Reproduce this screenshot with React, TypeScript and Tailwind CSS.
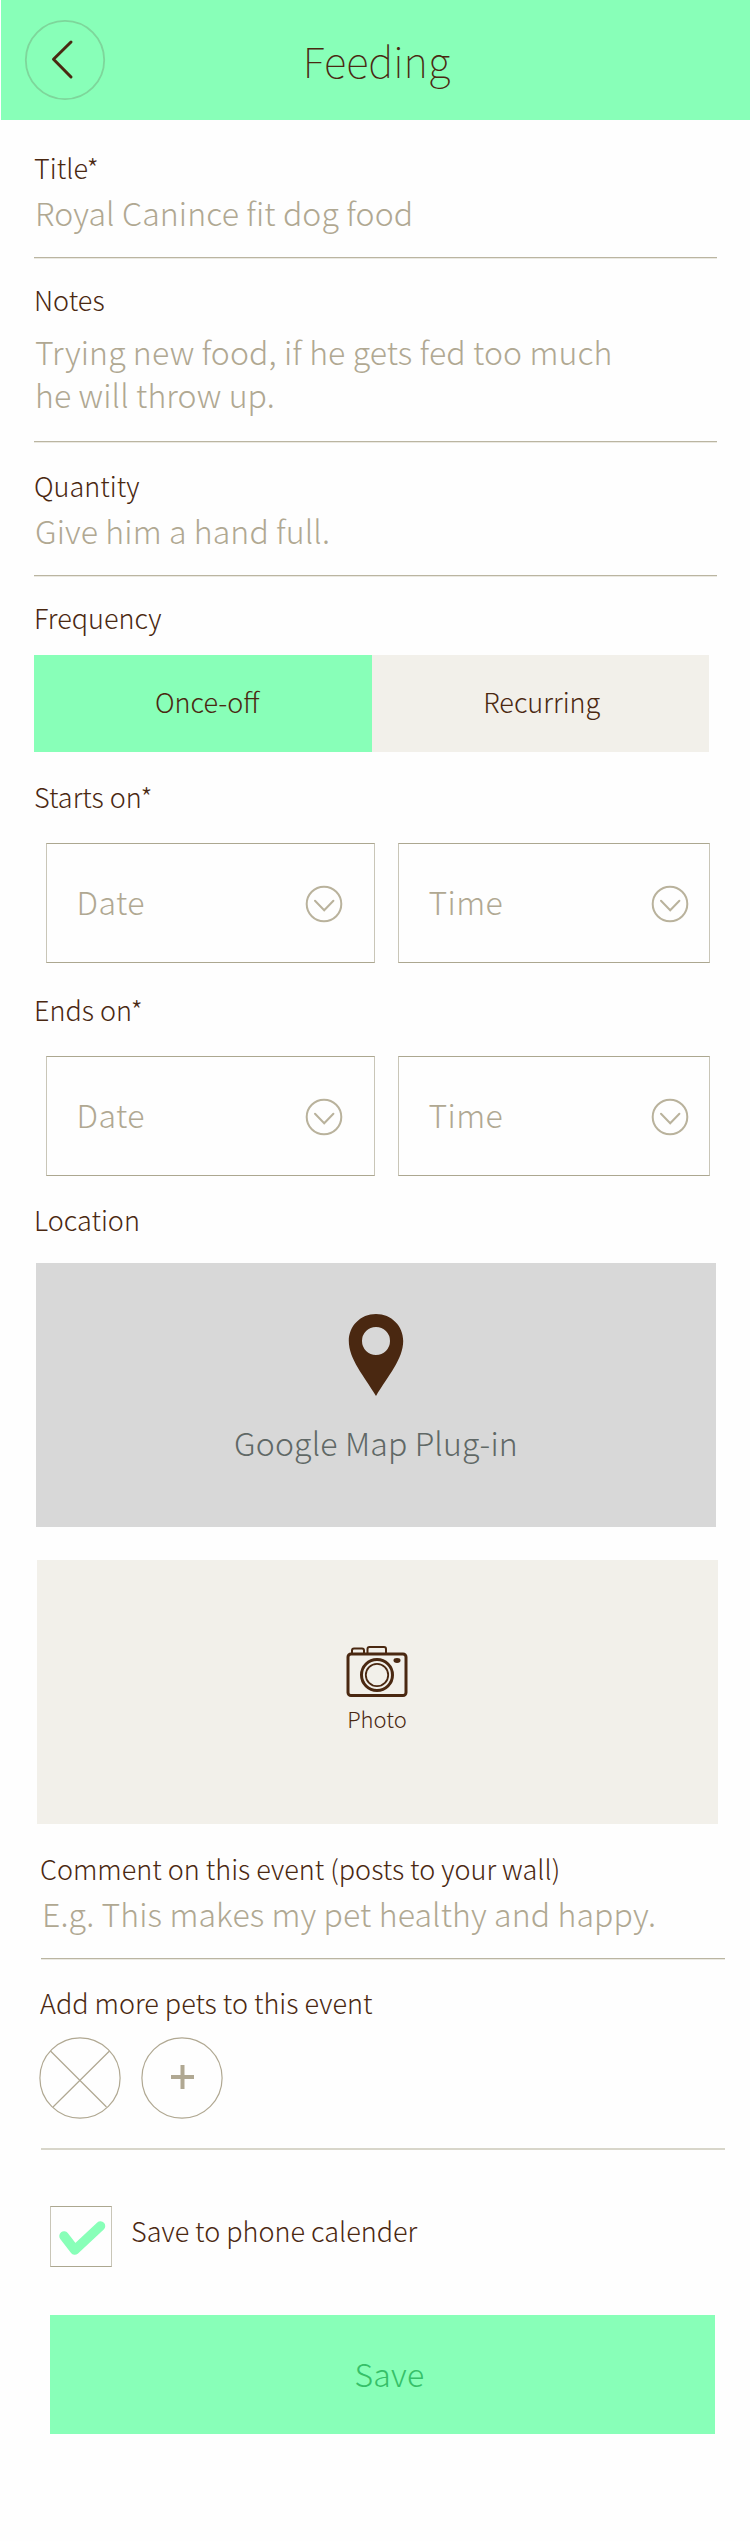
import type { ReactNode } from "react";

const label = "block h-10 whitespace-pre text-[27px] leading-[41px] text-[#4a2811]";
const value = "block whitespace-pre pl-px text-[32px] tracking-[0.13px] text-[#b0a892]";

function Field({ title, text, className, gap, lead = "leading-[42px]" }: { title: string; text: string; className: string; gap: string; lead?: string }) {
  return (
    <section className={`border-b border-[#bab5a1] shadow-[0_1px_#ebe9e2] ${className}`}>
      <label className={label}>{title}</label>
      <p className={`${value} ${gap} ${lead}`}>{text}</p>
    </section>
  );
}

function Picker({ text, className }: { text: string; className: string }) {
  return (
    <button className={`flex h-[120px] items-center justify-between border border-x-[#c9c6b8] border-y-[#aca790] pl-[30px] ${className}`}>
      <span className="-mt-1 text-[32px] leading-10 tracking-[0.4px] text-[#b0a892]">{text}</span>
      <svg width="38" height="38" viewBox="0 0 38 38" fill="none" stroke="#b9b29c" strokeWidth="2" className="mt-0.5">
        <circle cx="19" cy="19" r="17.3" />
        <path d="M10 15.7 19.2 25.3 28.4 15.7" strokeLinecap="round" />
      </svg>
    </button>
  );
}

function Pickers({ title, className }: { title: string; className: string }) {
  return (
    <section className={`ml-[34px] ${className}`}>
      <label className={label}>{title}</label>
      <div className="mt-[27px] ml-[11.5px] flex gap-[23px]">
        <Picker text="Date" className="w-[329px] pr-[31px]" />
        <Picker text="Time" className="w-[312px] pr-[20px]" />
      </div>
    </section>
  );
}

function Round({ children }: { children: ReactNode }) {
  return (
    <svg width="82" height="82" viewBox="0 0 82 82" fill="none" stroke="#b0a892" strokeWidth="1.2">
      <circle cx="41" cy="41" r="40.1" />
      {children}
    </svg>
  );
}

export default function App() {
  return (
    <main className="h-[2541px] w-[750px] overflow-hidden bg-[#fefefe] font-['Noto_Sans_CJK_SC','Noto_Sans_CJK_JP',sans-serif] font-light">
      <header className="ml-px grid h-[120px] grid-cols-[1fr_auto_1fr] items-center bg-[#88ffb8] pr-[1px] pl-[23px]">
        <svg width="82" height="82" viewBox="0 0 82 82" fill="none">
          <circle cx="41" cy="41" r="39.2" stroke="#7ed69b" strokeWidth="1.8" />
          <path d="M47 23 29.5 40.3 47 58" stroke="#4a2811" strokeWidth="3" strokeLinecap="round" strokeLinejoin="round" />
        </svg>
        <h1 className="-ml-[20px] text-[42px] leading-[60px] font-thin text-[#4a2811]">Feeding</h1>
      </header>

      <Field title="Title*" text="Royal Canince fit dog food" className="ml-[34px] h-[138px] w-[683px] pt-[27px]" gap="mt-1" />
      <Field title="Notes" text={"Trying new food, if he gets fed too much\nhe will throw up."} className="ml-[34px] h-[184px] w-[683px] pt-[21px]" gap="mt-[11px]" lead="leading-[43px]" />
      <Field title="Quantity" text="Give him a hand full." className="ml-[34px] h-[134px] w-[683px] pt-[23px]" gap="mt-1" />

      <section className="ml-[34px] w-[675px] pt-[21px]">
        <label className={label}>Frequency</label>
        <div className="mt-[18px] grid h-[97px] grid-cols-2 text-center text-[27px] leading-10 text-[#4a2811]">
          <button className="bg-[#88ffb8] pb-1 pl-[9px]">Once-off</button>
          <button className="bg-[#f2f0ea] pb-1 pl-[3px]">Recurring</button>
        </div>
      </section>

      <Pickers title="Starts on*" className="mt-6" />
      <Pickers title="Ends on*" className="mt-[26px]" />

      <section className="ml-[34px] pt-[23px]">
        <label className={label}>Location</label>
        <div className="mt-6 ml-[2px] flex h-[264px] w-[680px] flex-col items-center bg-[#d8d8d8] pt-[51px]">
          <svg width="56" height="84" viewBox="0 0 56 84" fill="#4a2811">
            <path fillRule="evenodd" d="M28 0C12.500 0 .8 12 .8 27 .8 45 16 62 28 82 40 62 55.200 45 55.200 27 55.200 12 43.500 0 28 0ZM28 13a14 14 0 1 1 0 28 14 14 0 0 1 0-28Z" />
          </svg>
          <p className="mt-6 text-[32px] leading-10 tracking-[0.15px] text-[#606866]">Google Map Plug-in</p>
        </div>
      </section>

      <button className="mt-[33px] ml-[36.5px] flex h-[264px] w-[681px] flex-col items-center bg-[#f2f0ea] pt-[85px]">
        <svg width="62" height="53" viewBox="0 0 62 53" fill="none" stroke="#4a2811">
          <rect x="2" y="9" width="58" height="41.500" rx="3" strokeWidth="3" />
          <path d="M6 8V5.500Q6 3.500 8 3.500H16Q18 3.500 18 5.500V8M21.500 8V4Q21.500 2 23.500 2H38Q40 2 40 4V8" strokeWidth="2" />
          <circle cx="31" cy="30" r="15.500" strokeWidth="3" />
          <circle cx="31" cy="30" r="11.200" strokeWidth="1.800" />
          <ellipse cx="51" cy="15.500" rx="3.500" ry="2.400" fill="#4a2811" stroke="none" />
        </svg>
        <span className="mt-1 text-[22px] leading-8 text-[#4a2811]">Photo</span>
      </button>

      <Field title="Comment on this event (posts to your wall)" text="E.g. This makes my pet healthy and happy." className="ml-[41px] h-[135px] w-[684px] pt-[24px] [&>label]:-ml-px" gap="mt-[4px]" />

      <section className="ml-[41px] h-[191px] w-[684px] border-b-2 border-[#d8d6ca] pt-[23px]">
        <label className={`${label} -ml-px`}>Add more pets to this event</label>
        <div className="mt-[15px] -ml-[2px] flex gap-5">
          <Round>
            <path d="M11.500 14 67.500 70M70.500 14 14 70" />
          </Round>
          <Round>
            <path d="M30 40H53M41.500 28V52" strokeWidth="4" />
          </Round>
        </div>
      </section>

      <section className="mt-14 ml-[50px] flex items-start">
        <span className="flex h-[61px] w-[62px] items-center justify-center border border-x-[#c9c6b8] border-y-[#aca790]">
          <svg width="60" height="59" viewBox="0 0 60 59" fill="none" stroke="#88ffb8" strokeWidth="9.500" strokeLinecap="round" strokeLinejoin="round">
            <path d="M13 29 23.800 43 49.500 19" />
          </svg>
        </span>
        <span className={`${label} mt-1 ml-[19px]`}>Save to phone calender</span>
      </section>

      <button className="mt-12 ml-[50px] block h-[119px] w-[665px] bg-[#88ffb8] pb-1 pl-[14px] text-[32px] leading-10 tracking-[0.3px] text-[#36c068]">Save</button>
    </main>
  );
}
